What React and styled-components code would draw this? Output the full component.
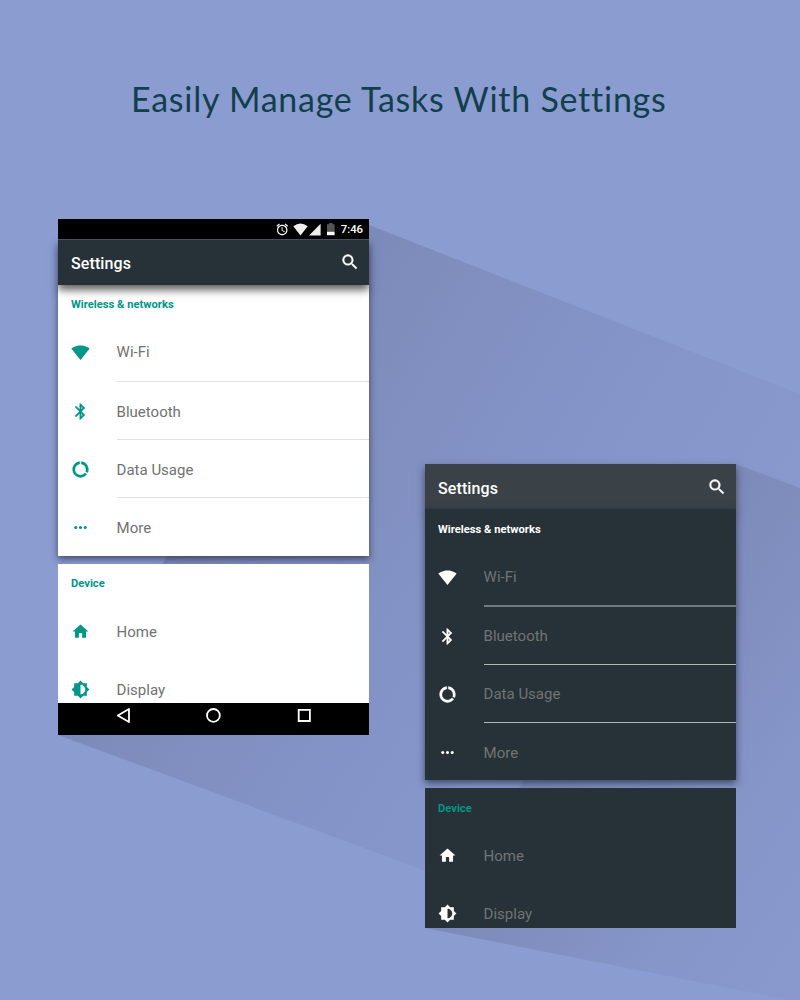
import React from 'react';
import styled, { createGlobalStyle, ThemeProvider } from 'styled-components';

const GlobalStyle = createGlobalStyle`
  * { box-sizing: border-box; }
  body { margin: 0; background: #8b9cd1; }
`;

const lightTheme = {
  bar: '#263238', barLine: '#47525f', card: '#ffffff', icon: '#009688',
  heading: '#009688', subHeading: '#009688', label: '#727272', divider: '#e0e0e0',
  barShadow: '0 5px 8px rgba(0,0,0,.62)', barLevel: 2, labelDrop: 2,
};
const darkTheme = {
  bar: '#3a4248', barLine: '#3a4248', card: '#263238', icon: '#ffffff',
  heading: '#ffffff', subHeading: '#009688', label: '#707475', divider: '#b1b6b9',
  barShadow: '0 4px 8px rgba(0,0,0,.5)', barLevel: 0, labelDrop: 1,
};

const Poster = styled.main`
  position: relative;
  width: 800px;
  height: 1000px;
  overflow: hidden;
  background: #8b9cd1;
  font-family: Roboto, "Liberation Sans", sans-serif;
`;
const Backdrop = styled.svg`
  position: absolute;
  inset: 0;
`;
const Title = styled.h1`
  position: relative;
  margin: 0;
  padding: 77px 0 0 131px;
  height: 219px;
  font: 400 34px/44px "Century Gothic", "URW Gothic", Lato, sans-serif;
  letter-spacing: 0.75px;
  white-space: nowrap;
  color: #123f4c;
`;
const Stage = styled.div`
  position: relative;
  display: flex;
  align-items: flex-start;
  gap: 56px;
  padding-left: 58px;
`;
const Device = styled.section`
  display: flex;
  flex-direction: column;
  width: 311px;
  height: ${(p) => p.$height}px;
  margin-top: ${(p) => p.$drop || 0}px;
`;
const StatusBar = styled.div`
  position: relative;
  z-index: 3;
  flex: none;
  display: flex;
  align-items: center;
  justify-content: flex-end;
  height: 20px;
  padding-right: 6px;
  background: #000;
  color: #fff;
`;
const Clock = styled.span`
  margin-left: 6px;
  font-size: 11.3px;
  font-weight: 500;
  line-height: 20px;
  padding-top: 2px;
`;
const AppBar = styled.header`
  position: relative;
  z-index: ${(p) => p.theme.barLevel};
  flex: none;
  display: flex;
  align-items: flex-start;
  justify-content: space-between;
  height: ${(p) => p.$height}px;
  padding: 12px 9px 0 13px;
  border-top: 1px solid ${(p) => p.theme.barLine};
  background: ${(p) => p.theme.bar};
  box-shadow: ${(p) => p.theme.barShadow};
  color: #fff;
`;
const BarTitle = styled.h2`
  margin: 0;
  padding-top: 2px;
  font-size: 16px;
  font-weight: 500;
  letter-spacing: 0.1px;
  line-height: 20px;
`;
const Card = styled.div`
  position: relative;
  z-index: 1;
  flex: none;
  height: ${(p) => p.$height}px;
  margin-bottom: ${(p) => (p.$raised ? 8 : 0)}px;
  overflow: hidden;
  background: ${(p) => p.theme.card};
  box-shadow: ${(p) => (p.$raised ? '0 3px 7px rgba(15,20,40,.6)' : 'none')};
`;
const Heading = styled.h3`
  margin: 0;
  height: ${(p) => p.$height}px;
  padding-left: 13px;
  font-size: 11.2px;
  font-weight: 700;
  line-height: ${(p) => p.$line || 39}px;
  color: ${(p) => (p.$sub ? p.theme.subHeading : p.theme.heading)};
`;
const Row = styled.div`
  display: flex;
  align-items: center;
  height: ${(p) => p.$height || 58}px;
  padding-left: 13px;
  color: ${(p) => p.theme.icon};
`;
const Label = styled.span`
  flex: 1;
  display: flex;
  align-items: center;
  align-self: stretch;
  margin-left: 26.6px;
  padding-top: ${(p) => p.$drop ?? p.theme.labelDrop}px;
  border-bottom: ${(p) => (p.$line ? `${p.$size || '1px'} solid` : '0 solid')} ${(p) => p.$tone || p.theme.divider};
  font-size: 15px;
  color: ${(p) => p.theme.label};
`;
const NavBar = styled.nav`
  position: relative;
  z-index: 2;
  flex: none;
  display: flex;
  align-items: flex-start;
  justify-content: space-between;
  height: 32px;
  padding: 4px 56px 0 57px;
  background: #000;
`;

const glyphs = {
  wifi: 'M12.01 21.49L23.64 7c-.45-.34-4.93-4-11.64-4C5.28 3 .81 6.66.36 7l11.63 14.49.01.01.01-.01z',
  bluetooth: 'M17.71 7.71L12 2h-1v7.59L6.41 5 5 6.41 10.59 12 5 17.59 6.41 19 11 14.41V22h1l5.71-5.71-4.3-4.29 4.3-4.29zM13 5.83l1.88 1.88L13 9.59V5.83zm1.88 10.46L13 18.17v-3.76l1.88 1.88z',
  data: 'M13 2.05v3.03c3.39.49 6 3.39 6 6.92 0 .9-.18 1.75-.48 2.54l2.6 1.53c.56-1.24.88-2.62.88-4.07 0-5.18-3.95-9.45-9-9.95zM12 19c-3.87 0-7-3.13-7-7 0-3.53 2.61-6.43 6-6.92V2.05c-5.06.5-9 4.76-9 9.95 0 5.52 4.47 10 9.99 10 3.31 0 6.24-1.61 8.06-4.09l-2.6-1.53C16.17 17.98 14.21 19 12 19z',
  more: 'M6 10c-1.1 0-2 .9-2 2s.9 2 2 2 2-.9 2-2-.9-2-2-2zm12 0c-1.1 0-2 .9-2 2s.9 2 2 2 2-.9 2-2-.9-2-2-2zm-6 0c-1.1 0-2 .9-2 2s.9 2 2 2 2-.9 2-2-.9-2-2-2z',
  home: 'M10 20v-6h4v6h5v-8h3L12 3 2 12h3v8z',
  display: 'M20 15.31L23.31 12 20 8.69V4h-4.69L12 .69 8.69 4H4v4.69L.69 12 4 15.31V20h4.69L12 23.31 15.31 20H20v-4.69zM12 18V6c3.31 0 6 2.69 6 6s-2.69 6-6 6z',
  search: 'M15.5 14h-.79l-.28-.27C15.41 12.59 16 11.11 16 9.5 16 5.91 13.09 3 9.5 3S3 5.91 3 9.5 5.91 16 9.5 16c1.61 0 3.09-.59 4.23-1.57l.27.28v.79l5 4.99L20.49 19l-4.99-5zm-6 0C7.01 14 5 11.99 5 9.5S7.01 5 9.5 5 14 7.01 14 9.5 11.99 14 9.5 14z',
  alarm: 'M22 5.72l-4.6-3.86-1.29 1.53 4.6 3.86L22 5.72zM7.88 3.39L6.6 1.86 2 5.71l1.29 1.53 4.59-3.85zM12.5 8H11v6l4.75 2.85.75-1.23-4-2.37V8zM12 4c-4.97 0-9 4.03-9 9s4.02 9 9 9c4.97 0 9-4.03 9-9s-4.03-9-9-9zm0 16c-3.87 0-7-3.13-7-7s3.13-7 7-7 7 3.13 7 7-3.13 7-7 7z',
};

const Glyph = styled.svg`
  flex: none;
  display: block;
  fill: currentColor;
`;
const Icon = ({ name, size = 19, weight = 0 }) => (
  <Glyph width={size} height={size} viewBox="0 0 24 24">
    <path d={glyphs[name]} stroke="currentColor" strokeWidth={weight} />
  </Glyph>
);

const StatusIcons = () => (
  <Glyph width="60" height="20" viewBox="0 0 60 20">
    <g transform="translate(.2 3.4) scale(.585)"><path d={glyphs.alarm} /></g>
    <path fill="#eee" d="M25.5 16.4 32.7 7.2Q25.5 2 18.3 7.2Z" />
    <path fill="#eee" d="M34 16.4H45.6V4.8Z" />
    <path fill="#555" d="M52 5.2h2V4h3.6v1.2h2V13H52z" />
    <path d="M52 12.8h7.6v3.4H52z" />
  </Glyph>
);

const NavIcon = ({ shape }) => (
  <Glyph width="18" height="18" viewBox="0 0 18 18">
    <g fill="none" stroke="#fff" strokeWidth="1.8" strokeLinejoin="round">
      {shape === 'back' && <path d="M2.8 8.5 14 2v13z" />}
      {shape === 'home' && <circle cx="8.4" cy="8.4" r="6.4" />}
      {shape === 'recent' && <path strokeLinejoin="miter" d="M3.7 2.8h11.2V14H3.7z" />}
    </g>
  </Glyph>
);

function Settings({ barHeight, dark }) {
  return (
    <>
      <AppBar $height={barHeight}>
        <BarTitle>Settings</BarTitle>
        <Icon name="search" size={20} weight={0.4} />
      </AppBar>
      <Card $height={271} $raised>
        <Heading $height={dark ? 38 : 37} $line={dark ? 41 : 39}>Wireless &amp; networks</Heading>
        <Row $height={60}><Icon name="wifi" /><Label $line $drop={dark ? 1 : 0} $size={dark ? '2px' : '1px'} $tone={dark ? '#717a81' : undefined}>Wi-Fi</Label></Row>
        <Row><Icon name="bluetooth" weight={0.4} /><Label $line>Bluetooth</Label></Row>
        <Row><Icon name="data" weight={0.4} /><Label $line>Data Usage</Label></Row>
        <Row><Icon name="more" /><Label>More</Label></Row>
      </Card>
      <Card $height={dark ? 140 : 139}>
        <Heading $height={38} $line={dark ? 41 : 39} $sub>Device</Heading>
        <Row><Icon name="home" /><Label>Home</Label></Row>
        <Row><Icon name="display" /><Label $drop={2}>Display</Label></Row>
      </Card>
    </>
  );
}

export default function App() {
  return (
    <Poster>
      <GlobalStyle />
      <Backdrop width="800" height="1000" viewBox="0 0 800 1000">
        <defs>
          <linearGradient id="castA" gradientUnits="userSpaceOnUse" x1="213" y1="480" x2="740" y2="802">
            <stop offset="0" stopColor="#7c8ab9" />
            <stop offset=".2" stopColor="#808fbf" />
            <stop offset=".45" stopColor="#8594c8" />
            <stop offset="1" stopColor="#8a9bd0" />
          </linearGradient>
          <linearGradient id="castB" gradientUnits="userSpaceOnUse" x1="580" y1="696" x2="980" y2="964">
            <stop offset="0" stopColor="#7c8ab9" />
            <stop offset=".2" stopColor="#808fbf" />
            <stop offset=".45" stopColor="#8796c9" />
            <stop offset="1" stopColor="#8b9cd1" />
          </linearGradient>
        </defs>
        <path fill="url(#castA)" d="M58 735 369 225 800 394v615z" />
        <path fill="url(#castB)" d="M425 928 736 464l64 24v514z" />
      </Backdrop>
      <Title>Easily Manage Tasks With Settings</Title>
      <Stage>
        <ThemeProvider theme={lightTheme}>
          <Device $height={516}>
            <StatusBar><StatusIcons /><Clock>7:46</Clock></StatusBar>
            <Settings barHeight={46} />
            <NavBar><NavIcon shape="back" /><NavIcon shape="home" /><NavIcon shape="recent" /></NavBar>
          </Device>
        </ThemeProvider>
        <ThemeProvider theme={darkTheme}>
          <Device $height={464} $drop={245}>
            <Settings barHeight={45} dark />
          </Device>
        </ThemeProvider>
      </Stage>
    </Poster>
  );
}
